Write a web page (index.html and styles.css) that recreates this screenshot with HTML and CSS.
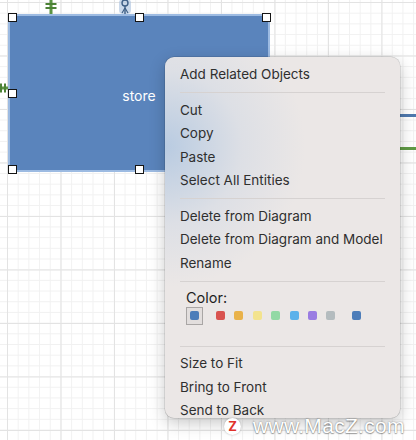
FILE: index.html
```
<!DOCTYPE html>
<html>
<head>
<meta charset="utf-8">
<link rel="stylesheet" href="styles.css">
</head>
<body>
<div class="canvas">
  <div class="entity"><span class="entity-name">store</span></div>
  <span class="handle h-tl"></span>
  <span class="handle h-tm"></span>
  <span class="handle h-tr"></span>
  <span class="handle h-ml"></span>
  <span class="handle h-bl"></span>
  <span class="handle h-bm"></span>

  <svg class="marker m-top-green" width="12" height="15" viewBox="0 0 12 15">
    <rect x="4.5" y="0" width="3" height="15" fill="#5c9444"/>
    <rect x="0.5" y="4" width="11" height="2" fill="#4c8236"/>
    <rect x="0.5" y="8" width="11" height="2" fill="#4c8236"/>
  </svg>
  <svg class="marker m-top-blue" width="12" height="15" viewBox="0 0 12 15">
    <rect x="0" y="0" width="12" height="15" rx="4" fill="#a9c0de" opacity="0.6"/>
    <circle cx="6" cy="4" r="3" fill="none" stroke="#3e5f86" stroke-width="1.4"/>
    <line x1="6" y1="7" x2="6" y2="15" stroke="#3e5f86" stroke-width="1.4"/>
    <line x1="3" y1="14" x2="6" y2="9" stroke="#3e5f86" stroke-width="1.2"/>
    <line x1="9" y1="14" x2="6" y2="9" stroke="#3e5f86" stroke-width="1.2"/>
  </svg>
  <svg class="marker m-left-green" width="10" height="10" viewBox="0 0 10 10">
    <rect x="0" y="3.5" width="10" height="3" fill="#5c9444"/>
    <rect x="2" y="0.5" width="2" height="9" fill="#4c8236"/>
    <rect x="6" y="0.5" width="2" height="9" fill="#4c8236"/>
  </svg>
  <span class="link link-blue"></span>
  <span class="link link-green"></span>

  <div class="menu">
    <div class="item">Add Related Objects</div>
    <div class="sep"></div>
    <div class="item">Cut</div>
    <div class="item">Copy</div>
    <div class="item">Paste</div>
    <div class="item">Select All Entities</div>
    <div class="sep"></div>
    <div class="item">Delete from Diagram</div>
    <div class="item">Delete from Diagram and Model</div>
    <div class="item">Rename</div>
    <div class="sep"></div>
    <div class="color-section">
      <div class="color-label">Color:</div>
      <div class="swatches">
        <span class="swatch-selected"><span class="sw sw-blue"></span></span>
        <span class="sw sw-red first"></span>
        <span class="sw sw-orange"></span>
        <span class="sw sw-yellow"></span>
        <span class="sw sw-green"></span>
        <span class="sw sw-sky"></span>
        <span class="sw sw-purple"></span>
        <span class="sw sw-gray"></span>
        <span class="sw sw-blue last"></span>
      </div>
    </div>
    <div class="sep"></div>
    <div class="item">Size to Fit</div>
    <div class="item">Bring to Front</div>
    <div class="item">Send to Back</div>
  </div>

  <div class="watermark">
    <span class="wm-logo">Z</span>
    <span class="wm-text">www.MacZ.com</span>
  </div>
</div>
</body>
</html>
```
FILE: styles.css
```
html, body {
  margin: 0;
  padding: 0;
}
body {
  width: 416px;
  height: 440px;
  overflow: hidden;
  font-family: "Inter", "Liberation Sans", sans-serif;
}
.canvas {
  position: relative;
  width: 416px;
  height: 440px;
  background-color: #ffffff;
  background-image:
    linear-gradient(to right, #e3e3e3 1px, transparent 1px),
    linear-gradient(to bottom, #e3e3e3 1px, transparent 1px),
    linear-gradient(to right, #f1f1f1 1px, transparent 1px),
    linear-gradient(to bottom, #f1f1f1 1px, transparent 1px);
  background-size: 53.5px 53.5px, 53.5px 53.5px, 10.7px 10.7px, 10.7px 10.7px;
  background-position: 7px 0, 0 2px, 7px 0, 0 2px;
}
.entity {
  position: absolute;
  left: 8px;
  top: 14px;
  width: 262px;
  height: 158px;
  box-sizing: border-box;
  background: #5a84bc;
  border: 2px solid #9dbbe2;
  display: flex;
  align-items: center;
  justify-content: center;
}
.entity-name {
  color: #ffffff;
  font-size: 14px;
  margin-top: 5px;
}
.handle {
  position: absolute;
  width: 9px;
  height: 9px;
  box-sizing: border-box;
  background: #ffffff;
  border: 1.5px solid #141414;
}
.h-tl { left: 8px; top: 13px; }
.h-tm { left: 135px; top: 13px; }
.h-tr { left: 262px; top: 13px; }
.h-ml { left: 8px; top: 89px; }
.h-bl { left: 8px; top: 165px; }
.h-bm { left: 135px; top: 165px; }
.marker { position: absolute; }
.m-top-green { left: 45px; top: -1px; }
.m-top-blue { left: 119px; top: -1px; }
.m-left-green { left: -2px; top: 83px; }
.link {
  position: absolute;
  left: 398px;
  width: 20px;
  height: 2.5px;
}
.link-blue { top: 114px; background: #4f79ae; }
.link-green { top: 147px; background: #5f9a45; }

.menu {
  position: absolute;
  left: 165px;
  top: 57px;
  width: 235px;
  height: 361px;
  box-sizing: border-box;
  padding: 6px 0 0 0;
  border-radius: 9px;
  background:
    radial-gradient(ellipse 140px 140px at 0px 90px, rgba(172, 196, 224, 0.8), rgba(200, 212, 228, 0.4) 55%, rgba(236, 232, 231, 0) 100%),
    #ebe7e6;
  box-shadow: 0 0 0 0.5px rgba(0, 0, 0, 0.18), 0 5px 16px rgba(0, 0, 0, 0.22);
  display: flex;
  flex-direction: column;
  color: #2f2f2f;
  font-size: 13.5px;
}
.item {
  height: 23.5px;
  line-height: 23.5px;
  padding-left: 15px;
  white-space: nowrap;
}
.sep {
  height: 12px;
  flex: none;
  position: relative;
}
.sep::after {
  content: "";
  position: absolute;
  left: 15px;
  right: 15px;
  top: 5.5px;
  height: 1px;
  background: #d6d2d1;
}
.color-section {
  padding: 3px 0 15.5px 21px;
}
.color-label {
  line-height: 16.5px;
  font-size: 14.5px;
  color: #1f1f1f;
}
.swatches {
  display: flex;
  align-items: center;
  height: 18px;
}
.swatch-selected {
  width: 17px;
  height: 18px;
  box-sizing: border-box;
  border: 1px solid #a9a6a5;
  background: #e2dedd;
  display: flex;
  align-items: center;
  justify-content: center;
}
.sw {
  width: 9px;
  height: 9px;
  border-radius: 2px;
  margin-left: 9.4px;
  flex: none;
}
.swatch-selected .sw { margin-left: 0; }
.sw.first { margin-left: 13px; }
.sw.last { margin-left: 17px; }
.sw-blue { background: #4d7db9; }
.sw-red { background: #d9534f; }
.sw-orange { background: #e9b24a; }
.sw-yellow { background: #f3e38e; }
.sw-green { background: #93d9a5; }
.sw-sky { background: #5cb1ea; }
.sw-purple { background: #9a7ce2; }
.sw-gray { background: #b4bcbf; }

.watermark {
  position: absolute;
  left: 224px;
  top: 414px;
  display: flex;
  align-items: center;
  gap: 12px;
  white-space: nowrap;
}
.wm-logo {
  width: 17px;
  height: 17px;
  flex: none;
  border-radius: 50%;
  background: #ffffff;
  color: #e0322a;
  font-weight: 700;
  font-size: 13px;
  line-height: 17px;
  text-align: center;
  box-shadow: 0 0 2px rgba(0, 0, 0, 0.3);
}
.wm-text {
  color: #ffffff;
  font-family: "Liberation Sans", sans-serif;
  font-size: 21px;
  line-height: 24px;
  letter-spacing: 0.3px;
  text-shadow: 0 0 2px rgba(0, 0, 0, 0.45), 0 1px 1px rgba(0, 0, 0, 0.3);
}
```
